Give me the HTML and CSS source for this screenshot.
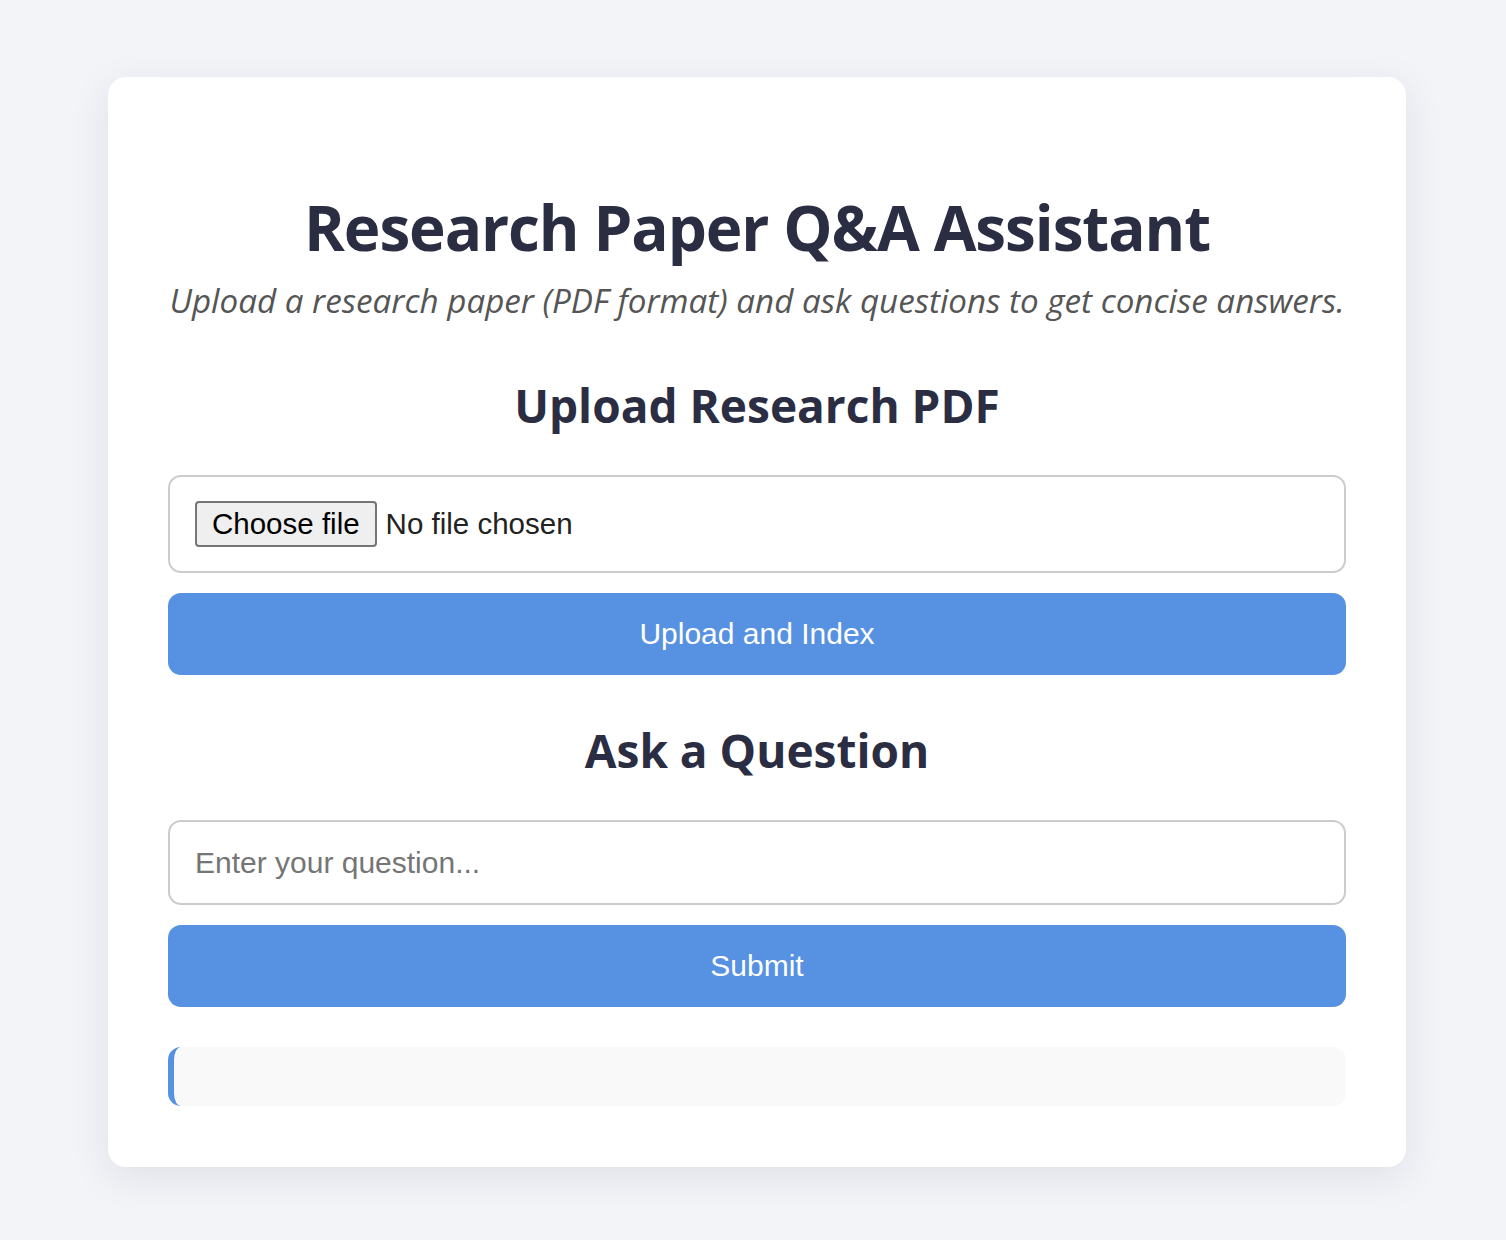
FILE: index.html
```html
<!DOCTYPE html>
<html lang="en">
<head>
<meta charset="utf-8">
<title>Research Paper Q&amp;A Assistant</title>
<link rel="stylesheet" href="styles.css">
</head>
<body>
<main class="card">
  <h1 class="title">Research Paper Q&amp;A Assistant</h1>
  <p class="subtitle">Upload a research paper (PDF format) and ask questions to get concise answers.</p>

  <h2 class="section-title">Upload Research PDF</h2>
  <div class="file-box">
    <span class="file-btn">Choose file</span>
    <span class="file-name">No file chosen</span>
  </div>
  <button class="primary-btn" type="button">Upload and Index</button>

  <h2 class="section-title">Ask a Question</h2>
  <input class="question" type="text" placeholder="Enter your question...">
  <button class="primary-btn" type="button">Submit</button>

  <div class="answer"></div>
</main>
</body>
</html>
```

FILE: styles.css
```css
* { box-sizing: border-box; }
html, body { margin: 0; padding: 0; }
body {
  background: #f3f4f8;
  font-family: "Open Sans", "Noto Sans", sans-serif;
  color: #2b2d42;
  padding: 77px 100px 74px 108px;
}
.card {
  width: 1298px;
  background: #ffffff;
  border-radius: 18px;
  box-shadow: 0 10px 40px rgba(30, 35, 60, 0.09);
  padding: 110px 60px 61px;
  display: flex;
  flex-direction: column;
}
.title {
  margin: 0;
  text-align: center;
  font-size: 62px;
  line-height: 80px;
  letter-spacing: -1.1px;
  font-weight: 700;
  color: #2b2d42;
}
.subtitle {
  margin: 14px 0 0;
  text-align: center;
  font-style: italic;
  font-size: 33.2px;
  line-height: 40px;
  color: #555555;
}
.section-title {
  margin: 54px 0 40px;
  text-align: center;
  font-size: 46px;
  line-height: 60px;
  font-weight: 700;
  color: #2b2d42;
}
.primary-btn + .section-title { margin-top: 45px; }
.file-box {
  height: 98px;
  border: 2px solid #cccccc;
  border-radius: 13px;
  padding: 0 25px;
  display: flex;
  align-items: center;
  gap: 9px;
  font-family: "Liberation Sans", Arial, sans-serif;
  font-size: 29.5px;
}
.file-btn {
  height: 46px;
  padding: 0 15px;
  display: flex;
  align-items: center;
  border: 2px solid #767676;
  border-radius: 4px;
  background: #efefef;
  color: #000000;
}
.file-name { color: #222222; }
.primary-btn {
  margin-top: 20px;
  height: 82px;
  border: none;
  border-radius: 13px;
  background: #5691e2;
  color: #ffffff;
  font-family: "Liberation Sans", Arial, sans-serif;
  font-size: 30px;
}
.question {
  height: 85px;
  border: 2px solid #cccccc;
  border-radius: 13px;
  padding: 0 25px;
  font-family: "Liberation Sans", Arial, sans-serif;
  font-size: 30px;
  color: #222222;
}
.question::placeholder { color: #757575; }
.answer {
  margin-top: 40px;
  height: 59px;
  background: #f9f9f9;
  border-left: 6px solid #5691e2;
  border-radius: 13px;
}
```
